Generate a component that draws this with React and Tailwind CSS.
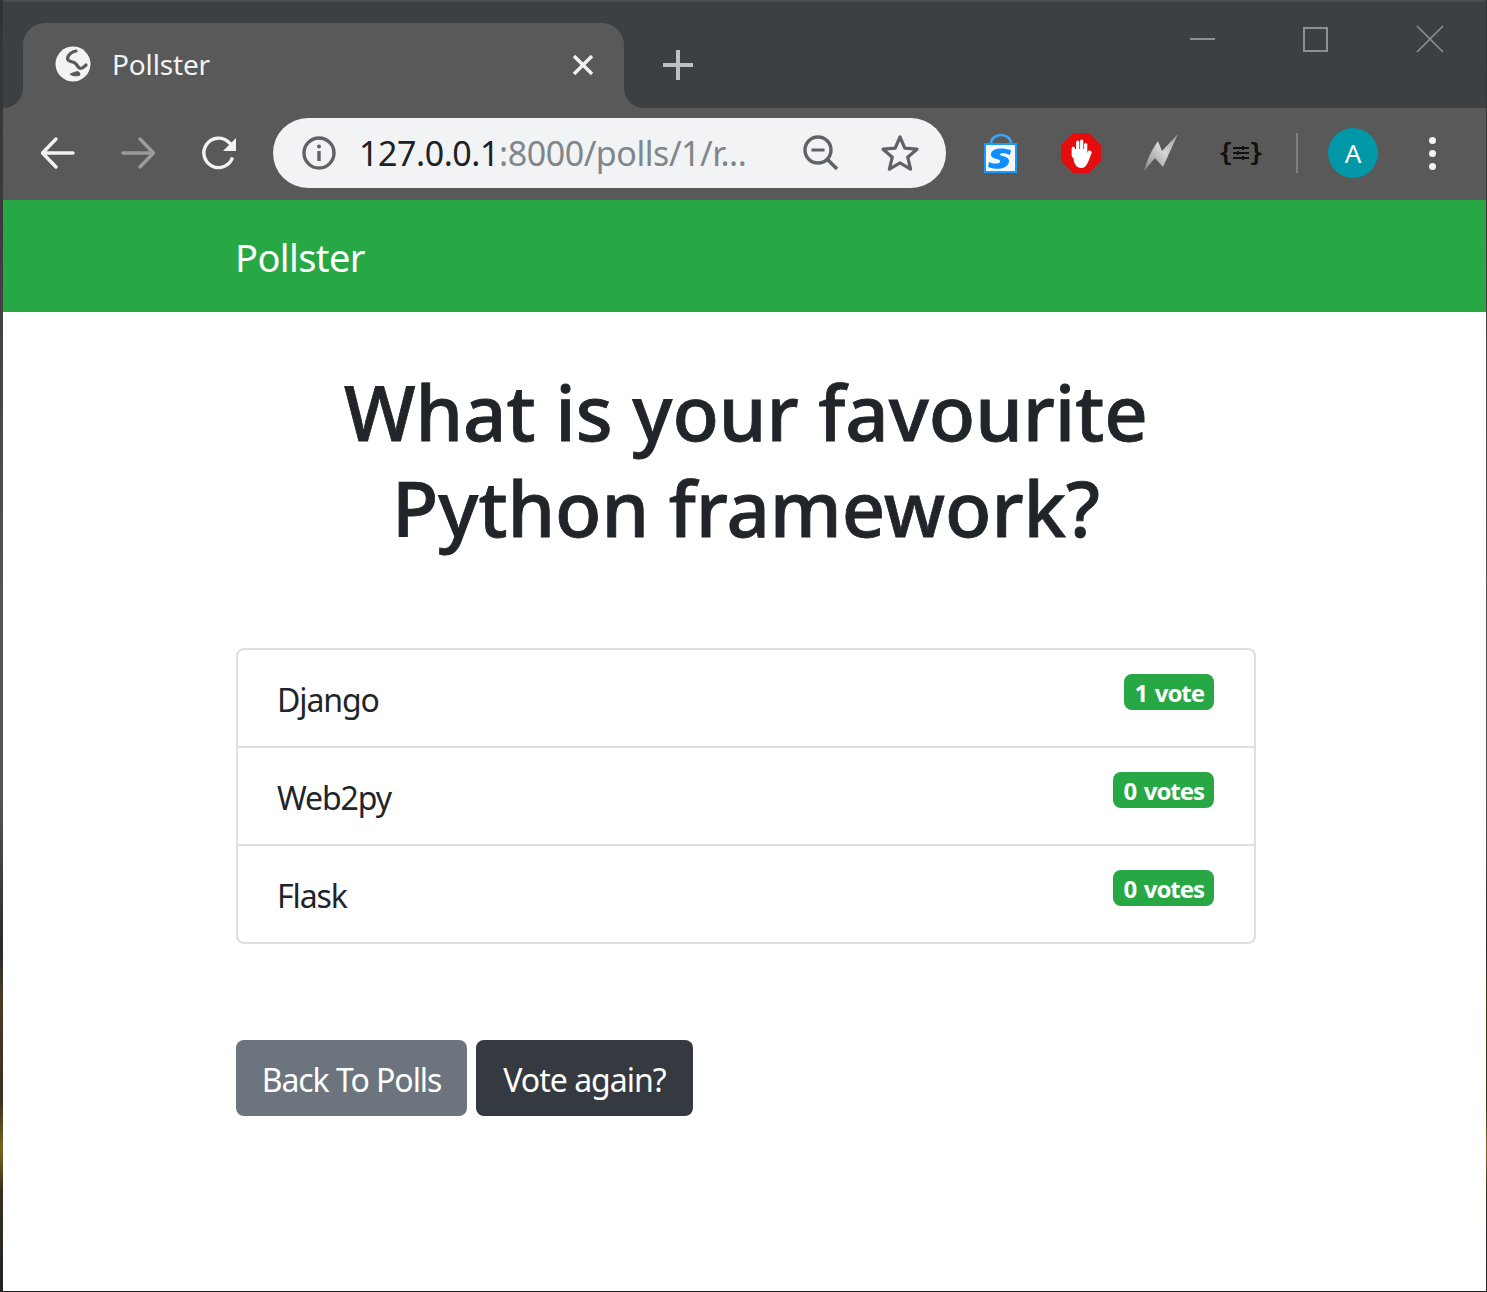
import React from "react";

const font = { fontFamily: '"Noto Sans", "Open Sans", sans-serif' };

function Globe() {
  return (
    <svg width="36" height="36" viewBox="0 0 36 36" className="shrink-0">
      <circle cx="18" cy="18" r="17.500" fill="#f1f3f4" />
      <path d="M21 5C16 6 13.500 9 12.500 12C12 15 16 15.500 19 16.500C23 18 22 22 25.500 22.500C28 22.500 29.500 20.500 31 19" fill="none" stroke="#595959" strokeWidth="3.200" strokeLinecap="round" />
      <path d="M14.500 28C17 26 20 26.500 22 25C25 25.500 26 27.500 25 29.500C21 31 17 30.500 14.500 28Z" fill="#595959" />
    </svg>
  );
}

function Toolbar() {
  return (
    <div className="flex h-[92px] items-center bg-[#595959] pb-[2px] pl-[35px]">
      <svg width="40" height="40" viewBox="0 0 40 40" fill="none" stroke="#f1f3f4" strokeWidth="3.400" strokeLinecap="round" strokeLinejoin="round">
        <path d="M35 20H5M18 6 4.500 20 18 34" />
      </svg>
      <svg width="40" height="40" viewBox="0 0 40 40" fill="none" stroke="#9a9b9c" strokeWidth="3.400" strokeLinecap="round" strokeLinejoin="round" className="ml-[40px]">
        <path d="M5 20h30M22 6l13.500 14L22 34" />
      </svg>
      <svg width="40" height="40" viewBox="0 0 40 40" fill="none" className="ml-[42px]">
        <path d="M32.500 24.500A14.700 14.700 0 1 1 29 9.500L33 13" stroke="#f1f3f4" strokeWidth="3.400" />
        <path d="M36 5v13H23Z" fill="#f1f3f4" />
      </svg>
      <div className="ml-[33px] flex h-[70px] w-[673px] items-center rounded-full bg-[#f1f3f4] pl-[28px]">
        <svg width="36" height="36" viewBox="0 0 36 36" fill="none" className="shrink-0">
          <circle cx="18" cy="18" r="15" stroke="#5f6368" strokeWidth="3.400" />
          <path d="M18 16v10" stroke="#5f6368" strokeWidth="3.400" />
          <circle cx="18" cy="11.500" r="2" fill="#5f6368" />
        </svg>
        <div className="ml-[22px] w-[390px] overflow-hidden text-[34px] leading-[48px] tracking-[-0.45px] whitespace-nowrap text-[#80868b]">
          <span className="text-[#202124]">127.0.0.1</span>:8000/polls/1/r...
        </div>
        <svg width="40" height="40" viewBox="0 0 40 40" fill="none" className="ml-[52px] shrink-0">
          <circle cx="17" cy="17" r="13" stroke="#5f6368" strokeWidth="3.400" />
          <path d="M10.500 17h13" stroke="#5f6368" strokeWidth="3" />
          <path d="M26.500 26.500 36 36" stroke="#5f6368" strokeWidth="3.600" />
        </svg>
        <svg width="40" height="40" viewBox="0 0 40 40" fill="none" className="ml-[39px] shrink-0">
          <path d="m20 4 4.800 11.200 12.200 1-9.300 8 2.900 12L20 29.800 9.400 36.200l2.900-12-9.300-8 12.200-1Z" stroke="#5f6368" strokeWidth="3.200" strokeLinejoin="round" />
        </svg>
      </div>
      <svg width="40" height="44" viewBox="0 0 40 44" className="ml-[34px] shrink-0">
        <path d="M11 13C11 1 31 1 31 13" fill="none" stroke="#3aa7ff" strokeWidth="2.500" />
        <rect x="5" y="13" width="31" height="28" fill="#f4f8fb" stroke="#1a9bfb" strokeWidth="2" />
        <path d="M31 19C24 17 12 16 11 23C10 29 22 27 20 31C19 33 13 33 9 31L8 36C15 39 27 39 29 31C30 24 19 26 20 23C21 22 26 22 30 24Z" fill="#0d8fff" />
      </svg>
      <svg width="40" height="40" viewBox="0 0 40 40" className="ml-[41px] shrink-0">
        <path d="M12 0h16l12 12v16L28 40H12L0 28V12Z" fill="#e40c0c" />
        <path d="M12.300 20C12 26 13 35 20 35C26 35 27 29 31 19L28 17L26 20V16H12.300Z" fill="#fff" />
        <path d="M12.300 15v8M16.700 9v10M20.700 8v10M24.700 11.500v8" stroke="#fff" strokeWidth="3.200" strokeLinecap="round" />
      </svg>
      <svg width="40" height="40" viewBox="0 0 40 40" className="ml-[40px] shrink-0">
        <defs>
          <linearGradient id="bolt" x1="0" y1="1" x2="1" y2="0">
            <stop offset="0" stopColor="#858585" />
            <stop offset="0.55" stopColor="#d6d6d6" />
            <stop offset="1" stopColor="#9a9a9a" />
          </linearGradient>
        </defs>
        <path d="M3 38Q7 22 17 8L21 18L37 1Q30 16 22 34L14 25Z" fill="url(#bolt)" />
      </svg>
      <div className="ml-[41px] flex w-[38px] shrink-0 items-center justify-center text-[#111]">
        <span className="text-[24px] leading-none font-bold" style={{ fontFamily: '"DejaVu Sans Mono", monospace' }}>{"{"}</span>
        <svg width="16" height="16" viewBox="0 0 16 16" stroke="#111" strokeWidth="1.800" className="shrink-0">
          <path d="M0 3h16M0 8h16M0 13h16M10 1v4M5 6v4M10 11v4" />
        </svg>
        <span className="text-[24px] leading-none font-bold" style={{ fontFamily: '"DejaVu Sans Mono", monospace' }}>{"}"}</span>
      </div>
      <div className="ml-[36px] h-[40px] w-[2px] shrink-0 bg-[#7f8081]" />
      <div className="ml-[30px] flex h-[50px] w-[50px] shrink-0 items-center justify-center rounded-full bg-[#0097a7] text-[26px] text-white">A</div>
      <div className="ml-[51px] flex shrink-0 flex-col gap-[6px]">
        <span className="h-[7px] w-[7px] rounded-full bg-[#f1f3f4]" />
        <span className="h-[7px] w-[7px] rounded-full bg-[#f1f3f4]" />
        <span className="h-[7px] w-[7px] rounded-full bg-[#f1f3f4]" />
      </div>
    </div>
  );
}

function TabStrip() {
  return (
    <div className="relative h-[108px] border-t-2 border-[#4a4c4e] bg-[#3c4043]">
      <div className="absolute top-[21px] left-[20px] flex h-[85px] w-[601px] items-center rounded-t-[22px] bg-[#595959] pb-[4px] pl-[32px]">
        <Globe />
        <span className="ml-[21px] text-[28px] leading-none tracking-[-0.15px] text-[#f1f3f4]">Pollster</span>
        <svg width="24" height="24" viewBox="0 0 24 24" stroke="#f1f3f4" strokeWidth="3.400" className="absolute top-[30px] left-[548px]">
          <path d="m3 3 18 18M21 3 3 21" />
        </svg>
      </div>
      <div className="absolute top-[86px] left-0 h-[20px] w-[20px] bg-[#595959]">
        <div className="h-full w-full rounded-br-[20px] bg-[#3c4043]" />
      </div>
      <div className="absolute top-[86px] left-[621px] h-[20px] w-[20px] bg-[#595959]">
        <div className="h-full w-full rounded-bl-[20px] bg-[#3c4043]" />
      </div>
      <svg width="32" height="32" viewBox="0 0 32 32" stroke="#bdc1c6" strokeWidth="4" className="absolute top-[47px] left-[659px]">
        <path d="M16 1v30M1 16h30" />
      </svg>
      <div className="absolute top-[36px] left-[1187px] h-[2px] w-[25px] bg-[#8e9092]" />
      <div className="absolute top-[25px] left-[1300px] h-[25px] w-[25px] border-2 border-[#8e9092]" />
      <svg width="28" height="28" viewBox="0 0 28 28" stroke="#8e9092" strokeWidth="1.600" className="absolute top-[23px] left-[1413px]">
        <path d="m1 1 26 26M27 1 1 27" />
      </svg>
    </div>
  );
}

function Choice({ name, votes }) {
  return (
    <div className="flex h-[98px] items-start justify-between border-b-2 border-[#dfdfdf] px-[40px] pt-[24px] last:h-[96px] last:border-b-0">
      <span className="mt-[2px] -ml-[1px] text-[32px] leading-[48px] tracking-[-1.1px] text-[#212529]">{name}</span>
      <span className="flex h-[36px] items-center rounded-[8px] bg-[#28a745] px-[10px] pt-[2px] text-[24px] leading-none font-bold tracking-[-1.05px] [word-spacing:2.5px] text-white">
        {votes}
      </span>
    </div>
  );
}

export default function App() {
  return (
    <div className="h-[1292px] w-[1487px] overflow-hidden bg-[linear-gradient(to_bottom,#333333_0px,#3a3a3a_200px,#555555_600px,#555555_800px,#2a2a2a_950px,#4a3c25_1000px,#3a3020_1100px,#7a6420_1150px,#3a3020_1190px,#222222_1292px)] pl-[3px]">
      <div className="flex h-[1291px] w-[1483px] flex-col bg-white" style={font}>
        <TabStrip />
        <Toolbar />
        <div className="flex h-[112px] items-center bg-[#28a745] pt-[2px] pl-[232px] text-[38px] tracking-[-0.6px] text-white">Pollster</div>
        <main className="ml-[233px] w-[1020px]">
          <h1 className="mt-[52px] text-center text-[76px] leading-[96px] font-medium tracking-[-0.05px] text-[#212529] [-webkit-text-stroke:0.8px_#212529]">
            What is your favourite
            <br />
            Python framework?
          </h1>
          <div className="mt-[92px] rounded-[8px] border-2 border-[#dfdfdf]">
            <Choice name="Django" votes="1 vote" />
            <Choice name="Web2py" votes="0 votes" />
            <Choice name="Flask" votes="0 votes" />
          </div>
          <div className="mt-[96px] flex gap-[9px]">
            <a className="flex h-[76px] w-[231px] items-center justify-center rounded-[8px] bg-[#6c757d] pt-[4px] text-[32px] tracking-[-1.05px] text-white">Back To Polls</a>
            <a className="flex h-[76px] w-[217px] items-center justify-center rounded-[8px] bg-[#343a40] pt-[4px] text-[32px] tracking-[-1px] text-white">Vote again?</a>
          </div>
        </main>
      </div>
    </div>
  );
}
